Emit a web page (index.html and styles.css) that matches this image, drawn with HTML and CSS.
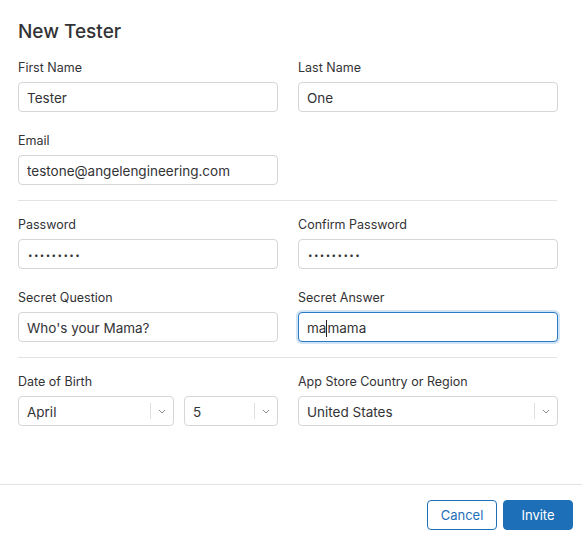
FILE: index.html
```html
<!DOCTYPE html>
<html lang="en">
<head>
<meta charset="utf-8">
<title>New Tester</title>
<link rel="stylesheet" href="styles.css">
</head>
<body>
<div class="sheet">
  <h1 class="title">New Tester</h1>
  <div class="grid">
    <label class="field"><span class="label">First Name</span><input class="input" type="text" value="Tester"></label>
    <label class="field"><span class="label">Last Name</span><input class="input" type="text" value="One"></label>
    <label class="field"><span class="label">Email</span><input class="input" type="text" value="testone@angelengineering.com"></label>
  </div>
  <hr class="divider">
  <div class="grid">
    <label class="field"><span class="label">Password</span><div class="input dots">•••••••••</div></label>
    <label class="field"><span class="label">Confirm Password</span><div class="input dots">•••••••••</div></label>
    <label class="field"><span class="label">Secret Question</span><input class="input" type="text" value="Who's your Mama?"></label>
    <label class="field"><span class="label">Secret Answer</span><div class="input focused">ma<span class="caret"></span>mama</div></label>
  </div>
  <hr class="divider">
  <div class="grid">
    <div class="field">
      <span class="label">Date of Birth</span>
      <div class="date-row">
        <div class="select month"><span class="select-value">April</span><span class="select-arrow"><svg width="8" height="5" viewBox="0 0 8 5"><path d="M1 1l3 3 3-3" fill="none" stroke="#8a8a8e" stroke-width="1"/></svg></span></div>
        <div class="select day"><span class="select-value">5</span><span class="select-arrow"><svg width="8" height="5" viewBox="0 0 8 5"><path d="M1 1l3 3 3-3" fill="none" stroke="#8a8a8e" stroke-width="1"/></svg></span></div>
      </div>
    </div>
    <div class="field">
      <span class="label">App Store Country or Region</span>
      <div class="select"><span class="select-value">United States</span><span class="select-arrow"><svg width="8" height="5" viewBox="0 0 8 5"><path d="M1 1l3 3 3-3" fill="none" stroke="#8a8a8e" stroke-width="1"/></svg></span></div>
    </div>
  </div>
</div>
<footer class="footer">
  <button class="btn btn-secondary" type="button">Cancel</button>
  <button class="btn btn-primary" type="button">Invite</button>
</footer>
</body>
</html>
```
FILE: styles.css
```css
* { box-sizing: border-box; }
html, body { margin: 0; padding: 0; background: #fff; }
body {
  font-family: "Inter", "Liberation Sans", sans-serif;
  color: #333336;
  width: 582px;
  height: 537px;
  overflow: hidden;
}
.sheet { padding: 0 25px 0 18px; }
.title {
  margin: 20px 0 15px;
  font-size: 19px;
  line-height: 24px;
  font-weight: 500;
  color: #333336;
}
.grid {
  display: grid;
  grid-template-columns: 260px 260px;
  column-gap: 20px;
  row-gap: 20px;
}
.field { display: flex; flex-direction: column; }
.label {
  font-size: 12.5px;
  line-height: 16px;
  margin-top: 1px;
  margin-bottom: 6px;
  color: #333336;
}
.input {
  height: 30px;
  width: 100%;
  border: 1px solid #d6d6d6;
  border-radius: 4px;
  padding: 2px 8px 0;
  font-family: inherit;
  font-size: 13.5px;
  color: #333336;
  background: #fff;
  outline: none;
  display: flex;
  align-items: center;
}
.dots { font-size: 8px; letter-spacing: 1.4px; padding-left: 9px; padding-top: 1px; }
.focused {
  border-color: #2b7bc4;
  box-shadow: 0 0 0 2px #cfe4f5;
}
.caret {
  display: inline-block;
  width: 1px;
  height: 17px;
  background: #222;
}
.divider {
  border: 0;
  border-top: 1px solid #e3e3e3;
  margin: 15px 0;
  width: 539px;
}
.date-row { display: flex; gap: 10px; }
.select {
  height: 30px;
  border: 1px solid #d6d6d6;
  border-radius: 4px;
  display: flex;
  align-items: center;
  font-size: 13.5px;
  color: #333336;
  background: #fff;
}
.month { width: 156px; }
.day { width: 94px; }
.select-value { flex: 1; padding: 2px 0 0 8px; }
.select-arrow {
  width: 23px;
  height: 16px;
  border-left: 1px solid #e0e0e0;
  display: flex;
  align-items: center;
  justify-content: center;
}
.footer {
  margin-top: 58px;
  border-top: 1px solid #e3e3e3;
  padding: 15px 9px 0 0;
  display: flex;
  justify-content: flex-end;
  gap: 6px;
}
.btn {
  width: 70px;
  height: 30px;
  border-radius: 4px;
  font-family: inherit;
  font-size: 13px;
  cursor: pointer;
}
.btn-secondary { background: #fff; border: 1px solid #1d6fb8; color: #1d6fb8; }
.btn-primary { background: #1d6fb8; border: 1px solid #1d6fb8; color: #fff; }
```
